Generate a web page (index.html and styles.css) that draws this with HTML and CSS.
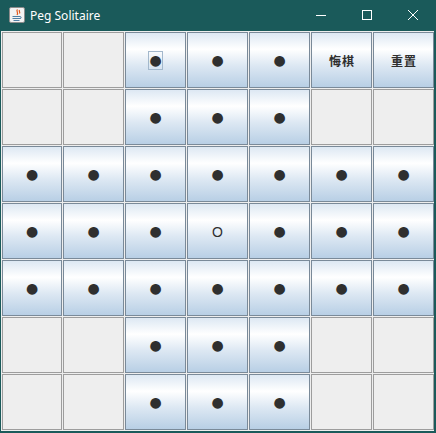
FILE: index.html
```html
<!DOCTYPE html>
<html>
<head>
<meta charset="utf-8">
<link rel="stylesheet" href="styles.css">
</head>
<body>
<div class="window">
  <div class="titlebar">
    <svg class="appicon" width="16" height="16" viewBox="0 0 16 16">
      <rect x="0.5" y="0.5" width="15" height="15" rx="1.5" fill="#f3f3f3" stroke="#8c8c8c"/>
      <path d="M8.5 2.5c-2 1.5 1.5 3 -0.5 5.5M10.5 3c-1 1.5 1 2 0 3.5" stroke="#e2581b" stroke-width="1.2" fill="none"/>
      <path d="M3.5 9.5h7.5M3.5 11.5h8M4.5 13.5h6M11 9.5c1.5 0 1.5 2 0 2" stroke="#4f7fa5" fill="none"/>
    </svg>
    <span class="title">Peg Solitaire</span>
    <div class="controls">
      <svg class="ctl" width="46" height="31" viewBox="0 0 46 31"><path d="M18 15.5h10" stroke="#fff"/></svg>
      <svg class="ctl" width="46" height="31" viewBox="0 0 46 31"><rect x="18.5" y="10.5" width="9" height="9" fill="none" stroke="#fff"/></svg>
      <svg class="ctl" width="46" height="31" viewBox="0 0 46 31"><path d="M18 10l10 10M28 10l-10 10" stroke="#fff"/></svg>
    </div>
  </div>
  <div class="content">
    <div class="board">
      <div class="btn off"></div>
      <div class="btn off"></div>
      <div class="btn on focus"><span class="lbl">●</span></div>
      <div class="btn on"><span class="lbl">●</span></div>
      <div class="btn on"><span class="lbl">●</span></div>
      <div class="btn on"><span class="txt">悔棋</span></div>
      <div class="btn on"><span class="txt">重置</span></div>

      <div class="btn off"></div>
      <div class="btn off"></div>
      <div class="btn on"><span class="lbl">●</span></div>
      <div class="btn on"><span class="lbl">●</span></div>
      <div class="btn on"><span class="lbl">●</span></div>
      <div class="btn off"></div>
      <div class="btn off"></div>

      <div class="btn on"><span class="lbl">●</span></div>
      <div class="btn on"><span class="lbl">●</span></div>
      <div class="btn on"><span class="lbl">●</span></div>
      <div class="btn on"><span class="lbl">●</span></div>
      <div class="btn on"><span class="lbl">●</span></div>
      <div class="btn on"><span class="lbl">●</span></div>
      <div class="btn on"><span class="lbl">●</span></div>

      <div class="btn on"><span class="lbl">●</span></div>
      <div class="btn on"><span class="lbl">●</span></div>
      <div class="btn on"><span class="lbl">●</span></div>
      <div class="btn on"><span class="lbl hole">O</span></div>
      <div class="btn on"><span class="lbl">●</span></div>
      <div class="btn on"><span class="lbl">●</span></div>
      <div class="btn on"><span class="lbl">●</span></div>

      <div class="btn on"><span class="lbl">●</span></div>
      <div class="btn on"><span class="lbl">●</span></div>
      <div class="btn on"><span class="lbl">●</span></div>
      <div class="btn on"><span class="lbl">●</span></div>
      <div class="btn on"><span class="lbl">●</span></div>
      <div class="btn on"><span class="lbl">●</span></div>
      <div class="btn on"><span class="lbl">●</span></div>

      <div class="btn off"></div>
      <div class="btn off"></div>
      <div class="btn on"><span class="lbl">●</span></div>
      <div class="btn on"><span class="lbl">●</span></div>
      <div class="btn on"><span class="lbl">●</span></div>
      <div class="btn off"></div>
      <div class="btn off"></div>

      <div class="btn off"></div>
      <div class="btn off"></div>
      <div class="btn on"><span class="lbl">●</span></div>
      <div class="btn on"><span class="lbl">●</span></div>
      <div class="btn on"><span class="lbl">●</span></div>
      <div class="btn off"></div>
      <div class="btn off"></div>
    </div>
  </div>
</div>
</body>
</html>
```
FILE: styles.css
```css
html, body {
  margin: 0;
  padding: 0;
  background: #1a5a5a;
}
.window {
  width: 436px;
  height: 433px;
  background: #1a5a5a;
  display: flex;
  flex-direction: column;
}
.titlebar {
  height: 31px;
  display: flex;
  align-items: center;
  color: #fff;
  font-family: "Noto Sans", "Open Sans", sans-serif;
  font-size: 12px;
}
.appicon {
  margin-left: 9px;
  margin-right: 5px;
  margin-top: -1px;
}
.title {
  margin-top: -1px;
}
.controls {
  margin-left: auto;
  display: flex;
}
.ctl {
  display: block;
}
.content {
  margin: 0 2px 2px 1px;
  height: 400px;
  background: #eeeeee;
}
.board {
  display: grid;
  grid-template-columns: 60px repeat(6, 61px);
  grid-template-rows: repeat(7, 56px);
  gap: 1px;
  padding: 1px 0 0 1px;
}
.btn {
  box-sizing: border-box;
  display: flex;
  align-items: center;
  justify-content: center;
  color: #2f2f2f;
}
.off {
  background: #eeeeee;
  border: 1px solid #9d9d9d;
}
.on {
  border: 1px solid #7a8a99;
  background: linear-gradient(#dde8f3 0%, #ffffff 30%, #dde8f3 60%, #b8cfe5 100%);
}
.lbl {
  box-sizing: border-box;
  width: 15px;
  height: 19px;
  border: 1px solid transparent;
  display: flex;
  align-items: center;
  justify-content: center;
  font-family: "DejaVu Sans", sans-serif;
  font-size: 14px;
  line-height: 1;
}
.focus .lbl {
  border-color: #a3b8cc;
}
.hole {
  font-family: "Liberation Sans", sans-serif;
  font-size: 14px;
  padding-top: 1px;
}
.txt {
  font-family: "Noto Sans CJK SC", sans-serif;
  font-weight: bold;
  font-size: 12px;
  letter-spacing: 1px;
  margin-right: -1px;
}
```
